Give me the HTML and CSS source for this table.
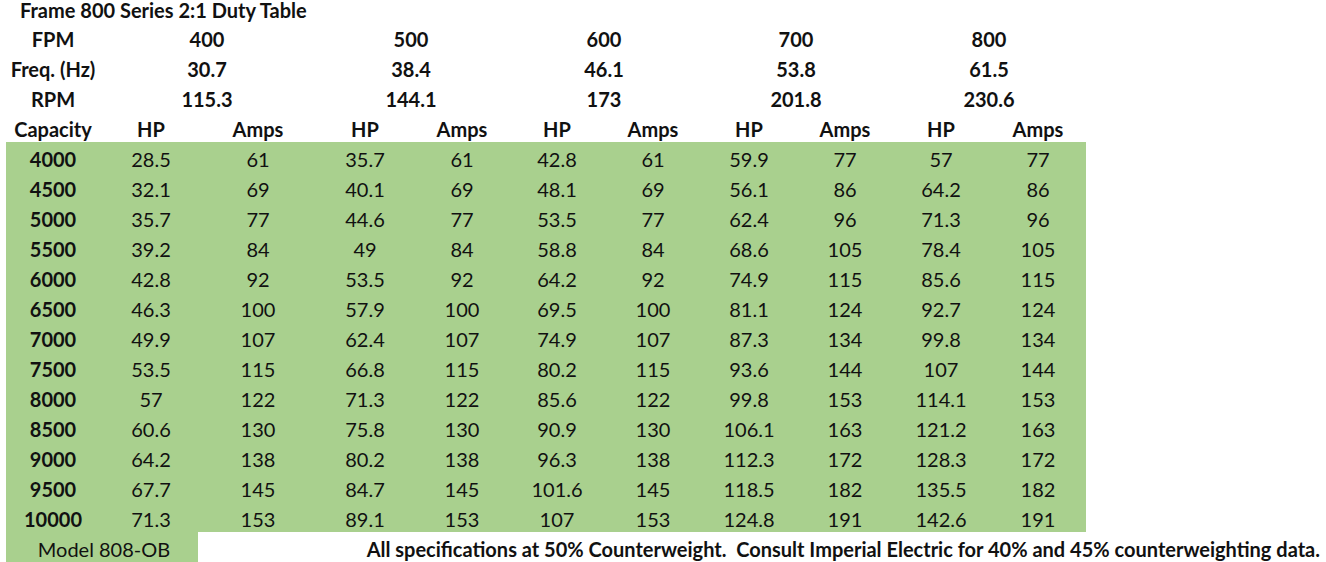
FILE: index.html
```html
<!DOCTYPE html>
<html>
<head>
<meta charset="utf-8">
<link rel="stylesheet" href="styles.css">
</head>
<body>
<div class="sheet">
  <div class="title">Frame 800 Series 2:1 Duty Table</div>
  <div class="grid head">
    <div class="lbl">FPM</div><div class="span">400</div><div class="span">500</div><div class="span">600</div><div class="span">700</div><div class="span">800</div>
    <div class="lbl">Freq. (Hz)</div><div class="span">30.7</div><div class="span">38.4</div><div class="span">46.1</div><div class="span">53.8</div><div class="span">61.5</div>
    <div class="lbl">RPM</div><div class="span">115.3</div><div class="span">144.1</div><div class="span">173</div><div class="span">201.8</div><div class="span">230.6</div>
    <div class="lbl">Capacity</div><div class="lbl">HP</div><div class="lbl">Amps</div><div class="lbl">HP</div><div class="lbl">Amps</div><div class="lbl">HP</div><div class="lbl">Amps</div><div class="lbl">HP</div><div class="lbl">Amps</div><div class="lbl">HP</div><div class="lbl">Amps</div>
  </div>
  <div class="grid data">
    <div class="cap">4000</div><div>28.5</div><div>61</div><div>35.7</div><div>61</div><div>42.8</div><div>61</div><div>59.9</div><div>77</div><div>57</div><div>77</div>
    <div class="cap">4500</div><div>32.1</div><div>69</div><div>40.1</div><div>69</div><div>48.1</div><div>69</div><div>56.1</div><div>86</div><div>64.2</div><div>86</div>
    <div class="cap">5000</div><div>35.7</div><div>77</div><div>44.6</div><div>77</div><div>53.5</div><div>77</div><div>62.4</div><div>96</div><div>71.3</div><div>96</div>
    <div class="cap">5500</div><div>39.2</div><div>84</div><div>49</div><div>84</div><div>58.8</div><div>84</div><div>68.6</div><div>105</div><div>78.4</div><div>105</div>
    <div class="cap">6000</div><div>42.8</div><div>92</div><div>53.5</div><div>92</div><div>64.2</div><div>92</div><div>74.9</div><div>115</div><div>85.6</div><div>115</div>
    <div class="cap">6500</div><div>46.3</div><div>100</div><div>57.9</div><div>100</div><div>69.5</div><div>100</div><div>81.1</div><div>124</div><div>92.7</div><div>124</div>
    <div class="cap">7000</div><div>49.9</div><div>107</div><div>62.4</div><div>107</div><div>74.9</div><div>107</div><div>87.3</div><div>134</div><div>99.8</div><div>134</div>
    <div class="cap">7500</div><div>53.5</div><div>115</div><div>66.8</div><div>115</div><div>80.2</div><div>115</div><div>93.6</div><div>144</div><div>107</div><div>144</div>
    <div class="cap">8000</div><div>57</div><div>122</div><div>71.3</div><div>122</div><div>85.6</div><div>122</div><div>99.8</div><div>153</div><div>114.1</div><div>153</div>
    <div class="cap">8500</div><div>60.6</div><div>130</div><div>75.8</div><div>130</div><div>90.9</div><div>130</div><div>106.1</div><div>163</div><div>121.2</div><div>163</div>
    <div class="cap">9000</div><div>64.2</div><div>138</div><div>80.2</div><div>138</div><div>96.3</div><div>138</div><div>112.3</div><div>172</div><div>128.3</div><div>172</div>
    <div class="cap">9500</div><div>67.7</div><div>145</div><div>84.7</div><div>145</div><div>101.6</div><div>145</div><div>118.5</div><div>182</div><div>135.5</div><div>182</div>
    <div class="cap">10000</div><div>71.3</div><div>153</div><div>89.1</div><div>153</div><div>107</div><div>153</div><div>124.8</div><div>191</div><div>142.6</div><div>191</div>
  </div>
  <div class="foot">
    <div class="model">Model 808-OB</div>
    <div class="note">All specifications at 50% Counterweight.&nbsp; Consult Imperial Electric for 40% and 45% counterweighting data.</div>
  </div>
</div>
</body>
</html>
```
FILE: styles.css
```css
html, body {
  margin: 0;
  padding: 0;
  background: #ffffff;
}
body {
  font-family: Lato, "Liberation Sans", sans-serif;
  font-size: 20px;
  color: #111111;
  width: 1326px;
  height: 562px;
  overflow: hidden;
}
.sheet {
  padding-left: 6px;
}
.title {
  height: 22px;
  line-height: 20px;
  padding-left: 14px;
  font-weight: 700;
}
.grid {
  display: grid;
  grid-template-columns: 94px 102px 112px 102px 92px 98px 94px 98px 94px 98px 96px;
  width: 1080px;
}
.grid > div {
  height: 30px;
  box-sizing: border-box;
  padding-top: 5px;
  line-height: 24px;
  text-align: center;
  white-space: nowrap;
}
.head .lbl {
  font-weight: 700;
}
.head .span {
  grid-column: span 2;
  font-weight: 700;
}
.data {
  background: #a9d08e;
}
.data .cap {
  font-weight: 700;
}
.foot {
  display: flex;
  height: 30px;
}
.model {
  width: 192px;
  background: #a9d08e;
  text-align: center;
  box-sizing: border-box;
  padding-top: 5px;
  padding-left: 4px;
  line-height: 24px;
}
.note {
  flex: 1;
  text-align: right;
  padding-right: 6px;
  padding-top: 5px;
  line-height: 24px;
  font-weight: 700;
  white-space: nowrap;
}
```
